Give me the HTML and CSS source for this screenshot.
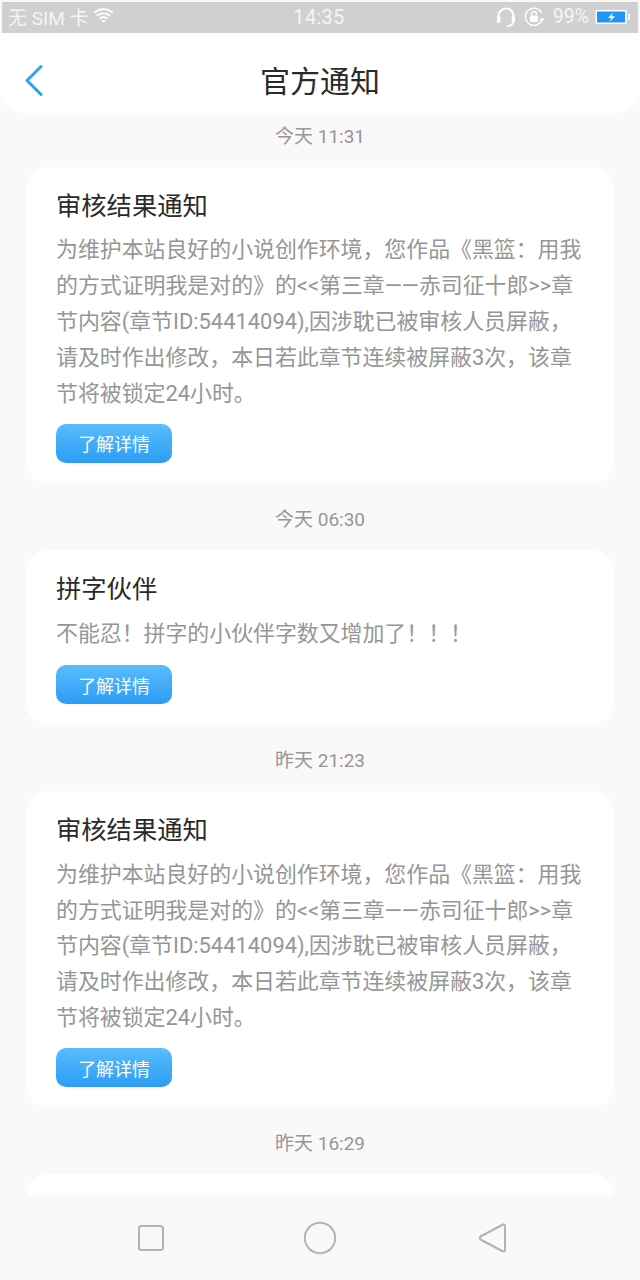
FILE: index.html
```html
<!DOCTYPE html>
<html lang="zh-CN">
<head>
<meta charset="utf-8">
<title>官方通知</title>
<link rel="stylesheet" href="styles.css">
</head>
<body>
<div class="phone">
  <div class="status">
    <div class="status-left">
      <span>无 SIM 卡</span>
      <svg class="wifi" width="21" height="16" viewBox="0 0 24 18" fill="none" stroke="#fff" stroke-width="2" stroke-linecap="round">
        <path d="M2 6C8 1 16 1 22 6"/><path d="M5 9.500C9 6.300 15 6.300 19 9.500"/><path d="M8 12.800C10.400 11 13.600 11 16 12.800"/><circle cx="12" cy="16" r="1.600" fill="#fff" stroke="none"/>
      </svg>
    </div>
    <div class="status-time">14:35</div>
    <div class="status-right">
      <svg width="20" height="22" viewBox="0 0 20 22" fill="none" stroke="#fff" stroke-width="2.2">
        <path d="M2.500 14V10a7.500 7.500 0 0 1 15 0v4"/><rect x="1" y="10" width="3.400" height="7" rx="1.500" fill="#fff" stroke="none"/><rect x="15.600" y="10" width="3.400" height="7" rx="1.500" fill="#fff" stroke="none"/><path d="M17 16.500c-.5 2.500-3 3.500-6 3.500" stroke-width="1.600"/>
      </svg>
      <svg class="lock" width="22" height="22" viewBox="0 0 22 22" fill="none" stroke="#fff" stroke-width="1.400">
        <path d="M19 14A8.600 8.600 0 1 1 18.800 7"/><path d="M16.500 12.500h5l-2.500 3z" fill="#fff" stroke="none"/><rect x="7" y="9.500" width="8" height="6.500" rx="1" fill="#fff" stroke="none"/><path d="M8.600 9.500V7.800a2.400 2.400 0 0 1 4.800 0v1.700"/>
      </svg>
      <span class="pct">99%</span>
      <svg width="36" height="16" viewBox="0 0 36 16">
        <rect x="0.500" y="1" width="31" height="14" fill="#fff"/><rect x="2" y="2.500" width="28" height="11" fill="#2196f3"/><rect x="33" y="5" width="2" height="6" fill="#f4f4f4"/><path d="M18 3.500l-5 5.400h3.400l-1.800 4 5.400-5.600h-3.400z" fill="#fff"/>
      </svg>
    </div>
  </div>
  <header class="topbar">
    <svg class="back" width="20" height="32" viewBox="0 0 20 32" fill="none" stroke="#2aa3ef" stroke-width="3" stroke-linecap="round" stroke-linejoin="round">
      <path d="M17 2.500L3 16.500L17 30.500"/>
    </svg>
    <h1>官方通知</h1>
  </header>
  <main class="feed">
    <div class="stamp">今天 11:31</div>
    <article class="card">
      <h2>审核结果通知</h2>
      <p>为维护本站良好的小说创作环境，您作品《黑篮：用我的方式证明我是对的》的&lt;&lt;第三章——赤司征十郎&gt;&gt;章节内容(章节ID:54414094),因涉耽已被审核人员屏蔽，请及时作出修改，本日若此章节连续被屏蔽3次，该章节将被锁定24小时。</p>
      <a class="more">了解详情</a>
    </article>
    <div class="stamp">今天 06:30</div>
    <article class="card card-short">
      <h2>拼字伙伴</h2>
      <p>不能忍！拼字的小伙伴字数又增加了！！！</p>
      <a class="more">了解详情</a>
    </article>
    <div class="stamp">昨天 21:23</div>
    <article class="card">
      <h2>审核结果通知</h2>
      <p>为维护本站良好的小说创作环境，您作品《黑篮：用我的方式证明我是对的》的&lt;&lt;第三章——赤司征十郎&gt;&gt;章节内容(章节ID:54414094),因涉耽已被审核人员屏蔽，请及时作出修改，本日若此章节连续被屏蔽3次，该章节将被锁定24小时。</p>
      <a class="more">了解详情</a>
    </article>
    <div class="stamp">昨天 16:29</div>
    <article class="card card-peek"></article>
  </main>
  <nav class="navbar">
    <svg width="28" height="28" viewBox="0 0 28 28" fill="none" stroke="#b3b3b3" stroke-width="2"><rect x="2" y="2" width="24" height="24" rx="2.500"/></svg>
    <svg width="34" height="34" viewBox="0 0 34 34" fill="none" stroke="#b3b3b3" stroke-width="2"><circle cx="17" cy="17" r="15.200"/></svg>
    <svg width="30" height="32" viewBox="0 0 30 32" fill="none" stroke="#b3b3b3" stroke-width="2" stroke-linejoin="round"><path d="M26 2.500Q28 2 28 4.500V27.500Q28 30 26 29.500L3.500 17.500Q2 16 3.500 14.500Z"/></svg>
  </nav>
</div>
</body>
</html>
```
FILE: styles.css
```css
* { box-sizing: border-box; }
html, body { margin: 0; padding: 0; }
body {
  background: #fff;
  font-family: Roboto, "Noto Sans CJK SC", sans-serif;
}
.phone {
  width: 640px;
  height: 1280px;
  display: flex;
  flex-direction: column;
  overflow: hidden;
  background: #faf8f9;
}
.status {
  flex: none;
  height: 31px;
  margin: 2px 2px 0;
  padding: 0 8px 2px 6px;
  background: #d0d0d0;
  color: #f5f5f5;
  font-size: 19px;
  display: grid;
  grid-template-columns: 1fr auto 1fr;
  align-items: center;
}
.status-left { display: flex; align-items: center; gap: 5px; }
.wifi { margin-top: -3px; }
.status-time { font-size: 20px; letter-spacing: 0.3px; }
.status-right { display: flex; align-items: center; justify-content: flex-end; gap: 7px; }
.pct { font-size: 19.500px; margin: 0 0 0 1px; }
.status-right > svg:last-child { margin-left: -1px; margin-right: -1px; }
.topbar {
  flex: none;
  height: 80px;
  padding-top: 12px;
  background: #fff;
  border-radius: 0 0 24px 24px;
  display: flex;
  align-items: center;
  justify-content: center;
  position: relative;
}
.topbar h1 {
  margin: 0;
  font-size: 30px;
  font-weight: 400;
  color: #2a2a2a;
}
.back { position: absolute; left: 24px; top: 31px; }
.feed {
  flex: 1;
  min-height: 0;
  overflow: hidden;
  padding: 0 27px;
}
.stamp {
  height: 26px;
  margin: 23px 0 18px;
  padding-bottom: 3px;
  display: flex;
  align-items: center;
  justify-content: center;
  font-size: 19px;
  color: #969696;
}
.feed > .stamp:first-child { margin-top: 10px; }
.card {
  background: #fff;
  border-radius: 20px;
  padding: 20px 29px 20px;
}
.card h2 {
  margin: 0;
  font-size: 25.300px;
  line-height: 40px;
  font-weight: 400;
  color: #2a2a2a;
}
.card p {
  margin: 5.400px 0 0;
  font-size: 21.900px;
  line-height: 35.800px;
  color: #969696;
}
.more {
  display: flex;
  width: 116px;
  height: 39px;
  margin-top: 12.600px;
  align-items: center;
  justify-content: center;
  border-radius: 10px;
  background: linear-gradient(#5abcfd, #2b9df5);
  color: #fff;
  font-size: 18px;
}
.card-short p { margin-top: 6.400px; }
.card-short .more { margin-top: 13.300px; }
.card-peek { height: 40px; }
.navbar {
  flex: none;
  height: 85px;
  background: #f9f9f9;
  display: grid;
  grid-template-columns: repeat(3, 1fr);
  align-items: center;
}
.navbar svg:nth-child(1) { justify-self: start; margin-left: 137px; }
.navbar svg:nth-child(2) { justify-self: center; }
.navbar svg:nth-child(3) { justify-self: end; margin-right: 133px; }
```
